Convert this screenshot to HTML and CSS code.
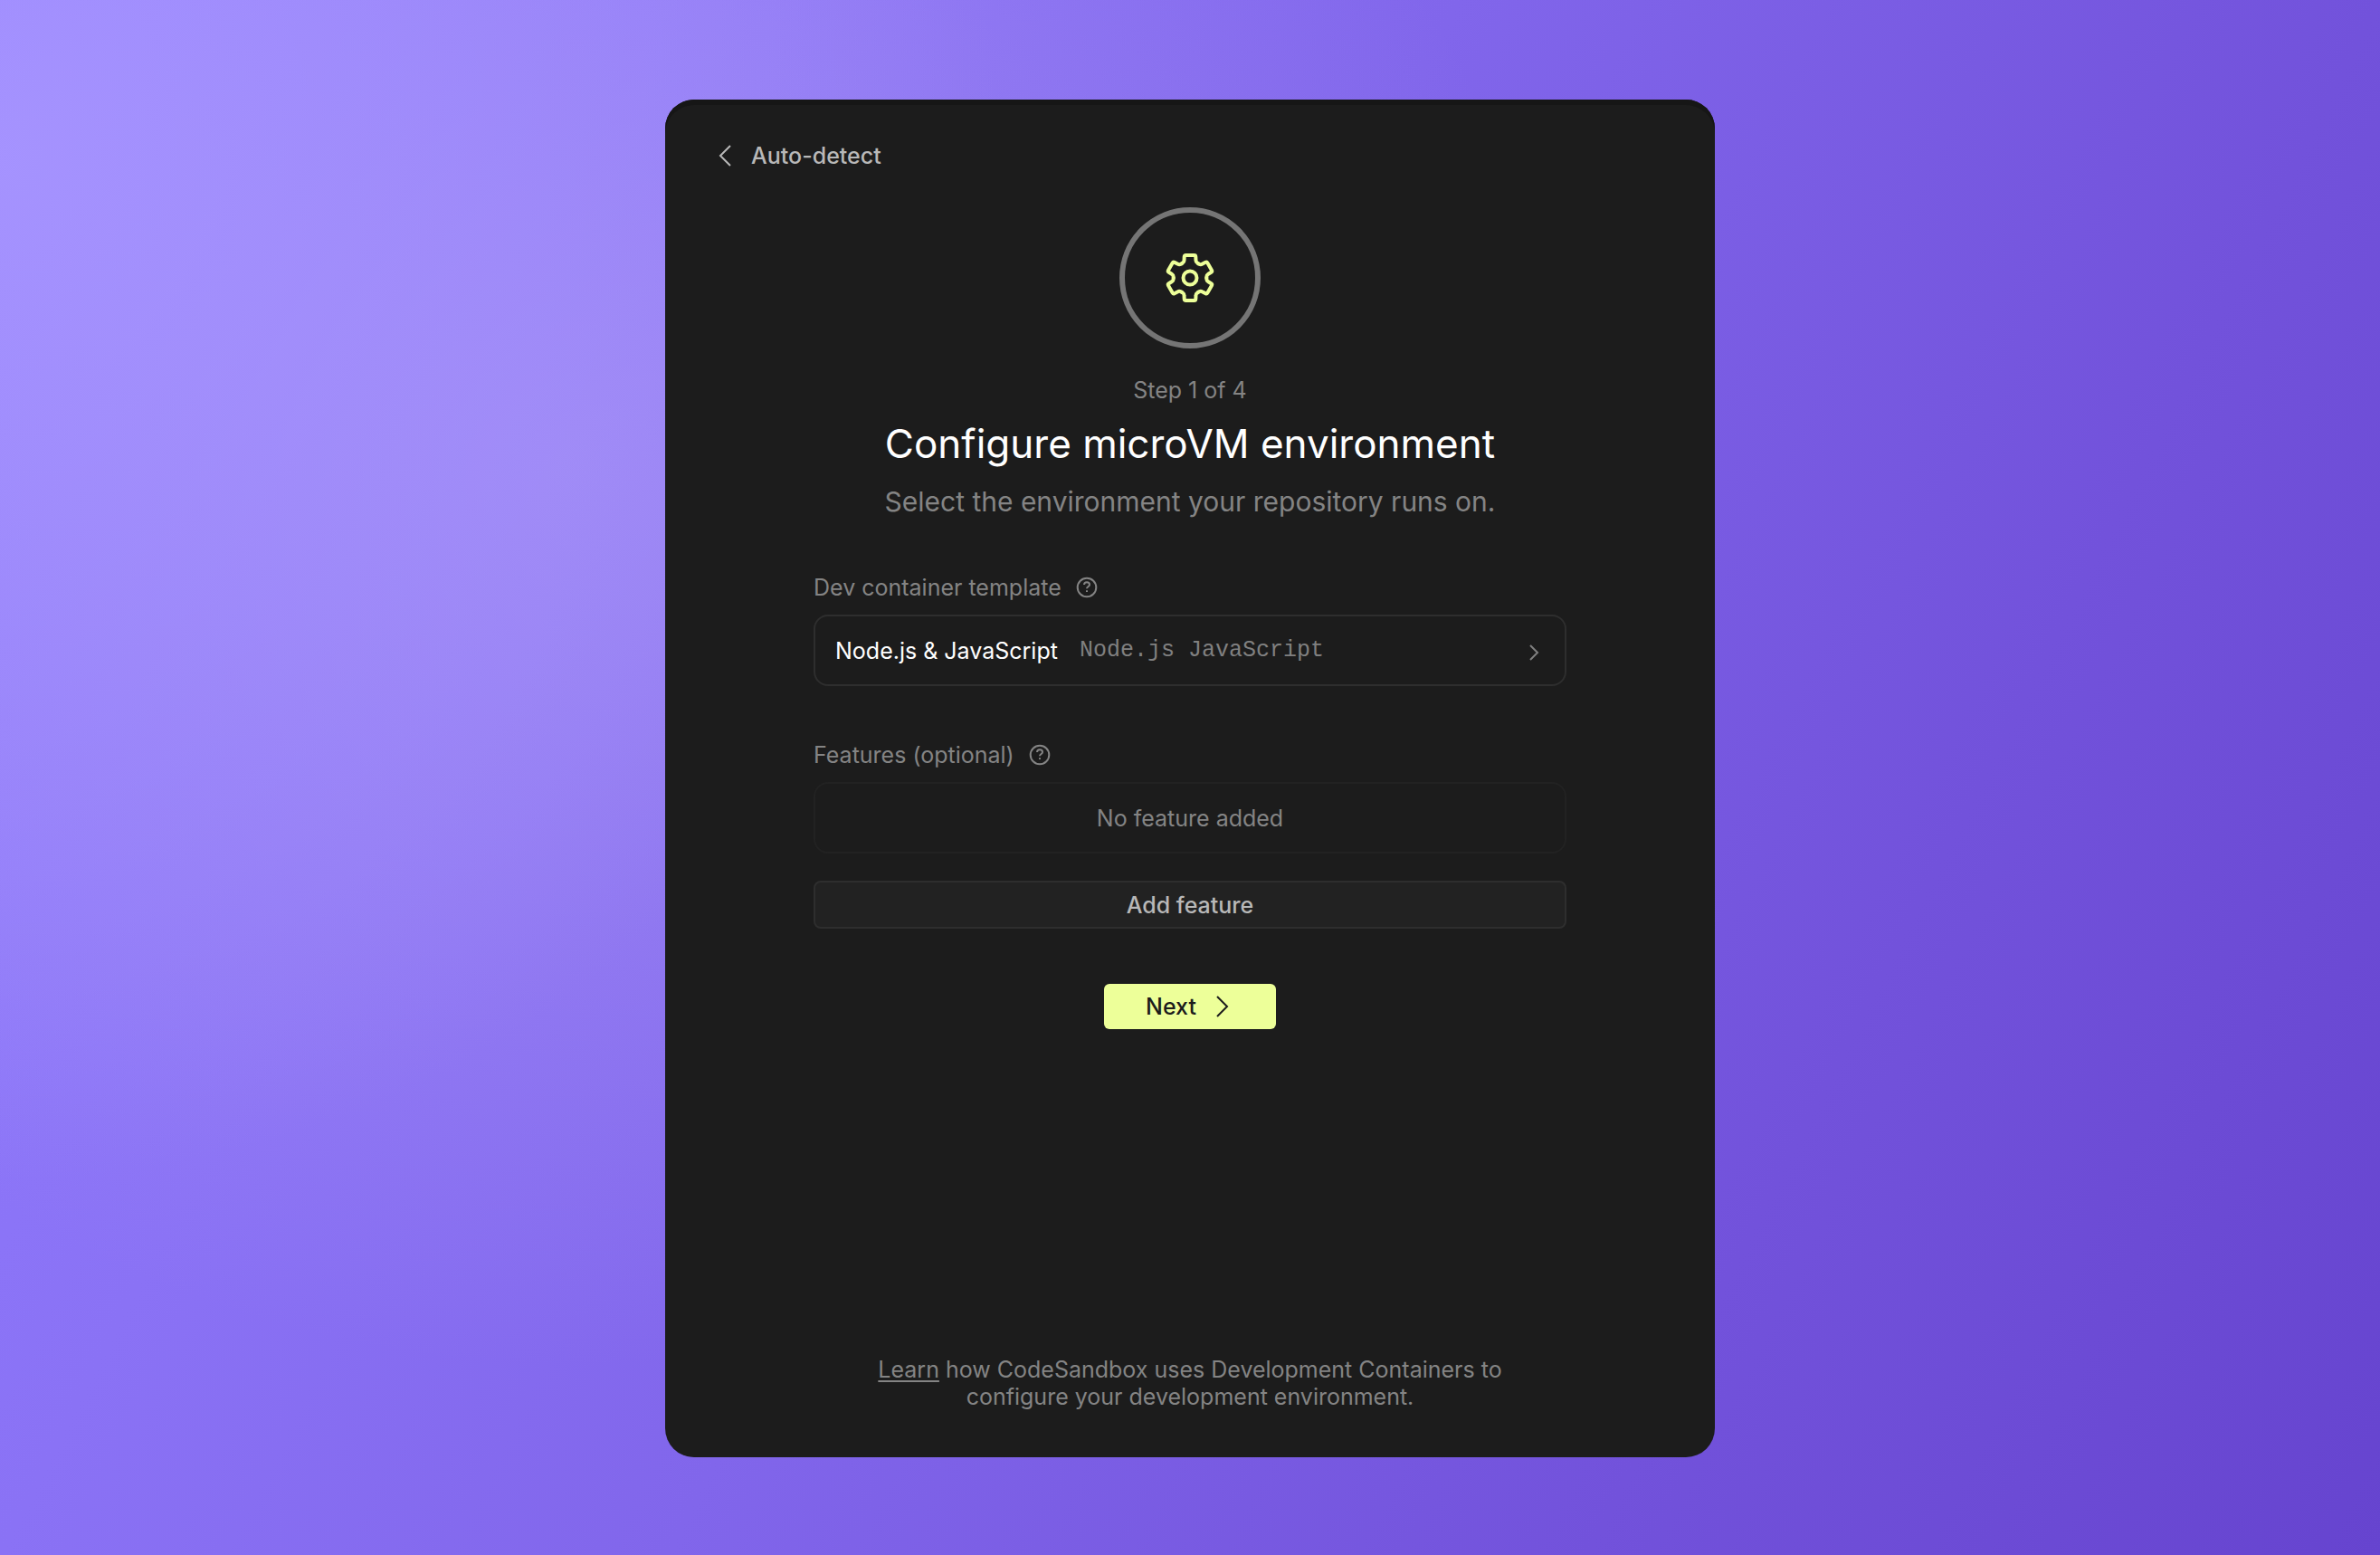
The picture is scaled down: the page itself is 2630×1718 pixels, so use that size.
FILE: index.html
```html
<!DOCTYPE html>
<html lang="en">
<head>
  <meta charset="utf-8">
  <meta name="viewport" content="width=device-width, initial-scale=1">
  <title>Configure microVM environment</title>
  <link rel="stylesheet" href="styles.css">
</head>
<body>
  <main class="card">
    <button class="back" type="button">
      <svg class="back-icon" viewBox="0 0 24 24" aria-hidden="true"><path d="M17 1 6 12l11 11"/></svg>
      Auto-detect
    </button>

    <header class="intro">
      <div class="badge">
        <svg class="gear" viewBox="-28 -28 56 56" aria-hidden="true">
          <defs>
            <path id="tooth" d="M-9.15-15.85L-8.2-16.4Q-6.5-17.4-6.5-19.2L-6.3-23.4Q-6.2-25-4.6-25H4.6Q6.2-25 6.3-23.4L6.5-19.2Q6.5-17.4 8.2-16.4L9.15-15.85"/>
          </defs>
          <use href="#tooth"/>
          <use href="#tooth" transform="rotate(60)"/>
          <use href="#tooth" transform="rotate(120)"/>
          <use href="#tooth" transform="rotate(180)"/>
          <use href="#tooth" transform="rotate(240)"/>
          <use href="#tooth" transform="rotate(300)"/>
          <circle r="7.5"/>
        </svg>
      </div>
      <p class="step">Step 1 of 4</p>
      <h1 class="title">Configure microVM environment</h1>
      <p class="subtitle">Select the environment your repository runs on.</p>
    </header>

    <form class="form">
      <section class="field">
        <div class="label-row">
          <label for="template">Dev container template</label>
          <svg class="help" viewBox="0 0 24 24" aria-hidden="true"><circle cx="12" cy="12" r="10.3"/><path d="M9 9.100C9 7.300 10.200 6.300 12 6.300S15 7.400 15 9C15 11 12 11 12 13.300"/><path d="M12 15.200V17"/></svg>
        </div>
        <button class="picker" id="template" type="button">
          <span>Node.js &amp; JavaScript</span>
          <span class="tags">Node.js JavaScript</span>
          <svg class="picker-icon" viewBox="0 0 12 20" aria-hidden="true"><path d="M2 4l8 8-8 8"/></svg>
        </button>
      </section>

      <section class="field">
        <div class="label-row">
          <h2 class="label">Features (optional)</h2>
          <svg class="help" viewBox="0 0 24 24" aria-hidden="true"><circle cx="12" cy="12" r="10.3"/><path d="M9 9.100C9 7.300 10.200 6.300 12 6.300S15 7.400 15 9C15 11 12 11 12 13.300"/><path d="M12 15.200V17"/></svg>
        </div>
        <p class="empty">No feature added</p>
        <button class="add" type="button">Add feature</button>
      </section>

      <button class="next" type="submit">
        Next
        <svg class="next-icon" viewBox="0 0 24 24" aria-hidden="true"><path d="M7 1l11 11L7 23"/></svg>
      </button>
    </form>

    <footer class="note"><a href="#learn">Learn</a> how CodeSandbox uses Development Containers to configure your development environment.</footer>
  </main>
</body>
</html>
```
FILE: styles.css
```css
* {
  box-sizing: border-box;
}

body {
  margin: 0;
  min-height: 100vh;
  padding: 110px 24px 108px;
  display: flex;
  justify-content: center;
  font: 400 25px/30px Inter, "Liberation Sans", sans-serif;
  color: #848484;
  background:
    radial-gradient(ellipse 42% 66% at 0% 10%, rgba(168, 150, 255, 0.85), rgba(168, 150, 255, 0)),
    radial-gradient(ellipse 42% 58% at 24% 30%, rgba(172, 152, 242, 0.55), rgba(172, 152, 242, 0)),
    linear-gradient(117deg, #8f7cff 0%, #8a72f5 25%, #8166eb 46%, #7252db 75%, #6644cf 100%);
}

button {
  font: inherit;
  cursor: pointer;
}

h1,
h2,
p {
  margin: 0;
  font-weight: 400;
}

svg {
  display: block;
  flex: none;
  fill: none;
  stroke: currentColor;
  stroke-width: 2;
}

.card {
  width: 100%;
  max-width: 1160px;
  padding: 46px 56px 52px;
  display: flex;
  flex-direction: column;
  align-items: center;
  border-radius: 32px;
  background: #1c1c1c;
  box-shadow: inset 0 6px 0 #161616;
}

.back {
  align-self: flex-start;
  display: flex;
  align-items: center;
  gap: 16px;
  height: 32px;
  margin-left: -1px;
  padding: 0;
  border: 0;
  background: none;
  color: #b8b8b8;
  font-weight: 500;
}

.back-icon,
.next-icon {
  width: 24px;
  height: 24px;
}

.intro {
  margin-top: 41px;
  display: flex;
  flex-direction: column;
  align-items: center;
  text-align: center;
}

.badge {
  width: 156px;
  height: 156px;
  margin-bottom: 31px;
  display: grid;
  place-items: center;
  border: 6px solid #757575;
  border-radius: 50%;
  color: #edff99;
}

.gear {
  width: 56px;
  height: 56px;
  stroke-width: 4;
  stroke-linecap: round;
}

.title {
  margin-top: 16px;
  font-size: 44px;
  line-height: 56px;
  color: #fff;
}

.subtitle {
  margin-top: 16px;
  font-size: 30px;
  line-height: 40px;
}

.form {
  width: 100%;
  max-width: 832px;
  margin-top: 60px;
  display: flex;
  flex-direction: column;
  align-items: center;
  gap: 61px;
}

.field {
  width: 100%;
}

.label-row {
  display: flex;
  align-items: center;
  gap: 16px;
  margin-bottom: 15px;
}

.label {
  font-size: inherit;
}

.help {
  width: 24px;
  height: 24px;
}

.picker,
.empty {
  width: 100%;
  height: 79px;
  display: flex;
  align-items: center;
  border: 2px solid #2e2e2e;
  border-radius: 16px;
}

.picker {
  gap: 24px;
  padding: 0 28px 0 22px;
  background: none;
  color: #fff;
}

.tags {
  font-family: "Liberation Mono", "Courier New", monospace;
  color: #808080;
}

.picker-icon {
  width: 12px;
  height: 20px;
  margin-left: auto;
  overflow: visible;
  color: #808080;
}

.empty {
  justify-content: center;
  border-color: #222;
}

.add {
  width: 100%;
  height: 53px;
  margin-top: 30px;
  border: 2px solid #2e2e2e;
  border-radius: 8px;
  background: #222;
  color: #b8b8b8;
  font-weight: 500;
}

.next {
  height: 50px;
  padding: 0 48px 0 46px;
  display: flex;
  align-items: center;
  gap: 16px;
  border: 0;
  border-radius: 6px;
  background: #edff99;
  color: #1c1c1c;
  font-weight: 500;
}

.note {
  max-width: 720px;
  margin-top: auto;
  text-align: center;
}

.note a {
  color: inherit;
  text-underline-offset: 3px;
  text-decoration-thickness: 2px;
}
```
